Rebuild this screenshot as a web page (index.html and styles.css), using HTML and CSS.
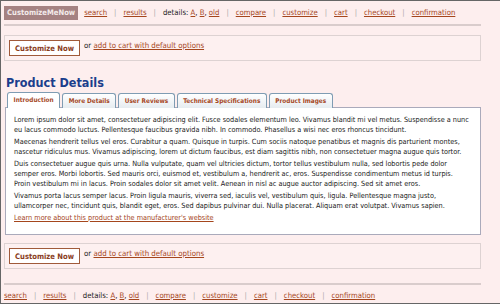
FILE: index.html
```html
<!DOCTYPE html>
<html lang="en">
<head>
    <meta charset="UTF-8">
    <title>CustomizeMeNow | Product Details</title>
    <link rel="stylesheet" href="styles.css">
</head>
<body>
<div class="page">

    <div class="nav">
        <span class="logo">CustomizeMeNow</span>
        <a href="#">search</a><span class="sep">|</span>
        <a href="#">results</a><span class="sep">|</span>
        <span>details: <a href="#">A</a>, <a href="#">B</a>, <a href="#">old</a></span><span class="sep">|</span>
        <a href="#">compare</a><span class="sep">|</span>
        <a href="#">customize</a><span class="sep">|</span>
        <a href="#">cart</a><span class="sep">|</span>
        <a href="#">checkout</a><span class="sep">|</span>
        <a href="#">confirmation</a>
    </div>
    <div class="rule"></div>

    <div class="buybox">
        <button class="btn">Customize Now</button>
        <span>or <a href="#">add to cart with default options</a></span>
    </div>

    <h2>Product Details</h2>

    <div class="tabs">
        <span class="tab active">Introduction</span>
        <span class="tab">More Details</span>
        <span class="tab">User Reviews</span>
        <span class="tab">Technical Specifications</span>
        <span class="tab">Product Images</span>
    </div>
    <div class="panel">
        <p>Lorem ipsum dolor sit amet, consectetuer adipiscing elit. Fusce sodales elementum leo. Vivamus blandit mi vel metus. Suspendisse a nunc eu lacus commodo luctus. Pellentesque faucibus gravida nibh. In commodo. Phasellus a wisi nec eros rhoncus tincidunt.</p>
        <p>Maecenas hendrerit tellus vel eros. Curabitur a quam. Quisque in turpis. Cum sociis natoque penatibus et magnis dis parturient montes, nascetur ridiculus mus. Vivamus adipiscing, lorem ut dictum faucibus, est diam sagittis nibh, non consectetuer magna augue quis tortor.</p>
        <p>Duis consectetuer augue quis urna. Nulla vulputate, quam vel ultricies dictum, tortor tellus vestibulum nulla, sed lobortis pede dolor semper eros. Morbi lobortis. Sed mauris orci, euismod et, vestibulum a, hendrerit ac, eros. Suspendisse condimentum metus id turpis. Proin vestibulum mi in lacus. Proin sodales dolor sit amet velit. Aenean in nisl ac augue auctor adipiscing. Sed sit amet eros.</p>
        <p>Vivamus porta lacus semper lacus. Proin ligula mauris, viverra sed, iaculis vel, vestibulum quis, ligula. Pellentesque magna justo, ullamcorper nec, tincidunt quis, blandit eget, eros. Sed dapibus pulvinar dui. Nulla placerat. Aliquam erat volutpat. Vivamus sapien.</p>
        <p><a href="#">Learn more about this product at the manufacturer's website</a></p>
    </div>

    <div class="buybox lower">
        <button class="btn">Customize Now</button>
        <span>or <a href="#">add to cart with default options</a></span>
    </div>

    <div class="rule"></div>
    <div class="nav footer">
        <a href="#">search</a><span class="sep">|</span>
        <a href="#">results</a><span class="sep">|</span>
        <span>details: <a href="#">A</a>, <a href="#">B</a>, <a href="#">old</a></span><span class="sep">|</span>
        <a href="#">compare</a><span class="sep">|</span>
        <a href="#">customize</a><span class="sep">|</span>
        <a href="#">cart</a><span class="sep">|</span>
        <a href="#">checkout</a><span class="sep">|</span>
        <a href="#">confirmation</a>
    </div>

</div>
</body>
</html>
```

FILE: styles.css
```css
html, body {
    margin: 0;
    padding: 0;
}
body {
    font-family: "DejaVu Sans Condensed", "DejaVu Sans", sans-serif;
    font-size: 7.25px;
    color: #1a1a1a;
    background-color: #fdeeee;
}
.page {
    box-sizing: border-box;
    height: 304px;
    border: 1px solid #666;
    border-right: none;
    padding: 0 0 0 3px;
    overflow: hidden;
}
a {
    color: #a5461d;
}
.nav {
    display: flex;
    align-items: center;
    height: 23px;
    font-size: 7.7px;
    width: 477px;
}
.logo {
    background-color: #a58282;
    color: #f3eaea;
    font-weight: bold;
    font-size: 7.6px;
    padding: 2px 3px;
    margin-right: 6px;
    line-height: 10px;
}
.sep {
    color: #aaa;
    margin: 0 7px;
}
.rule {
    width: 477px;
    height: 2px;
    background-color: #d9cccc;
}
.buybox {
    display: flex;
    align-items: flex-start;
    gap: 4px;
    width: 477px;
    box-sizing: border-box;
    height: 26px;
    margin-top: 9px;
    padding: 4px;
    border: 1px solid #ddd2d2;
    background-color: #fdf0f0;
    font-size: 7.8px;
}
.buybox span {
    margin-top: 1px;
}
.btn {
    font-family: inherit;
    font-size: 7.6px;
    font-weight: bold;
    color: #8a3d1c;
    background-color: #fff;
    border: 1px solid #a05a3a;
    padding: 0 5px;
    height: 16px;
    cursor: pointer;
}
.buybox.lower {
    margin-top: 8px;
    margin-bottom: 14px;
}
h2 {
    color: #1b3e8c;
    font-size: 12.5px;
    margin: 14px 0 0 2px;
    line-height: 16px;
}
.tabs {
    display: flex;
    gap: 2px;
    margin: 0 0 0 3px;
    height: 16px;
    align-items: flex-end;
}
.tab {
    height: 14px;
    line-height: 14px;
    padding: 0 5.5px;
    border: 1px solid #7f9cb3;
    border-bottom: none;
    border-radius: 3px 3px 0 0;
    background: linear-gradient(#ffffff, #e6ecf0);
    color: #a5461d;
    font-weight: bold;
    font-size: 6.4px;
    position: relative;
    top: 1px;
}
.tab.active {
    background: #fff;
    height: 15px;
}
.panel {
    width: 476px;
    box-sizing: border-box;
    margin-left: 1px;
    background-color: #fff;
    border: 1px solid #aab;
    padding: 7px 10px 9px 8px;
    line-height: 10px;
}
.panel p {
    margin: 0 0 2px 0;
}
.footer {
    height: 20px;
    margin-top: 0;
}
```
